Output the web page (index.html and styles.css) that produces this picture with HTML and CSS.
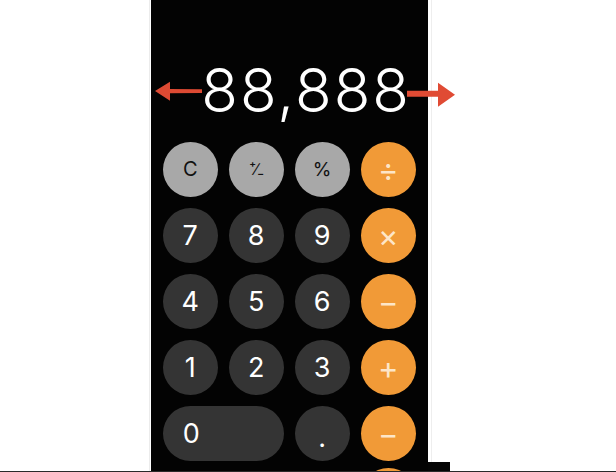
FILE: index.html
```html
<!DOCTYPE html>
<html>
<head>
<meta charset="utf-8">
<link rel="stylesheet" href="styles.css">
</head>
<body>
<div class="page">
  <div class="stage">
    <div class="frame">
      <div class="phone">
        <div class="display">88,888</div>
        <div class="keypad">
          <div class="key light">C</div>
          <div class="key light pm">⁺∕₋</div>
          <div class="key light pct">%</div>
          <div class="key op">÷</div>
          <div class="key dark">7</div>
          <div class="key dark">8</div>
          <div class="key dark">9</div>
          <div class="key op">×</div>
          <div class="key dark">4</div>
          <div class="key dark">5</div>
          <div class="key dark">6</div>
          <div class="key op">−</div>
          <div class="key dark">1</div>
          <div class="key dark">2</div>
          <div class="key dark">3</div>
          <div class="key op">+</div>
          <div class="key dark zero">0</div>
          <div class="key dark dot">.</div>
          <div class="key op">−</div>
          <div class="key op peek"></div>
        </div>
      </div>
    </div>
    <div class="side">
      <div class="strip"></div>
    </div>
  </div>
  <div class="baseline"></div>
  <svg class="arrows" width="310" height="32" viewBox="0 0 310 32">
    <polygon fill="#dd4a33" points="5,13 20,3.7 20,11 52,11.2 52,15 20,15.3 20,22.7"/>
    <polygon fill="#e04b34" points="257,12.7 288,12.7 288,4.7 305,16.7 288,28.7 288,18.7 257,18.7"/>
  </svg>
</div>
</body>
</html>
```

FILE: styles.css
```css
* { box-sizing: border-box; }
html, body { margin: 0; padding: 0; background: #fff; }
.page {
  position: relative;
  width: 616px;
  height: 472px;
  overflow: hidden;
  display: flex;
  flex-direction: column;
}
.stage {
  display: flex;
  height: 471px;
}
.frame {
  margin-left: 149px;
  border-left: 1px solid #ececec;
  padding-left: 1px;
  padding-right: 3px;
  border-right: 1px solid #eeeeee;
  height: 100%;
}
.phone {
  width: 277px;
  height: 100%;
  background: #030303;
  overflow: hidden;
}
.display {
  padding-top: 60px;
  height: 122px;
  padding-right: 17px;
  text-align: right;
  font-family: "Inter", "Liberation Sans", sans-serif;
  font-weight: 300;
  font-size: 60px;
  line-height: 60px;
  color: #fff;
  letter-spacing: 2px;
}
.keypad {
  margin-top: 19.5px;
  margin-left: 11.7px;
  display: grid;
  grid-template-columns: repeat(4, 55px);
  grid-auto-rows: 55px;
  column-gap: 11px;
  row-gap: 11px;
}
.key {
  border-radius: 28px;
  display: flex;
  align-items: center;
  justify-content: center;
  font-family: "Inter", "Liberation Sans", sans-serif;
  font-size: 27px;
  color: #fff;
}
.light { background: #a8a8a8; color: #111; font-size: 20px; }
.pm { font-size: 17px; letter-spacing: -1px; }
.pct { font-size: 19px; }
.dark { background: #343434; }
.op { background: #f19a37; color: rgba(255, 238, 215, 0.92); font-size: 31px; font-weight: 400; }
.zero {
  grid-column: span 2;
  justify-content: flex-start;
  padding-left: 20px;
}
.dot { padding-top: 8px; }
.peek { grid-column: 4; margin-top: -4px; }
.side {
  width: 22px;
  display: flex;
  flex-direction: column;
  justify-content: flex-end;
  margin-left: -4px;
}
.strip {
  height: 9px;
  background: #050505;
}
.baseline {
  height: 1px;
  background: #2a2a2a;
}
.arrows {
  position: absolute;
  left: 150px;
  top: 78px;
}
```
